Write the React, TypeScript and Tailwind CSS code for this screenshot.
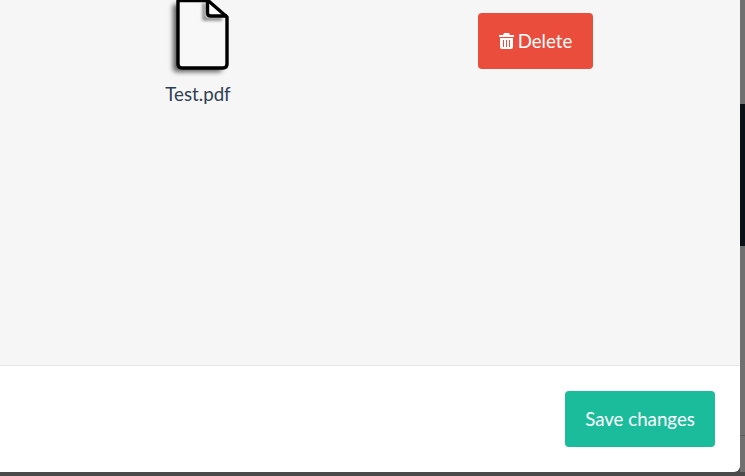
const docPath = "M13 0.5H43L62 17V64Q62 68 58 68H17Q13 68 13 64Z"

const FileIcon = () => {
  return (
    <svg width="66" height="78" viewBox="0 0 66 78" className="block">
      <defs>
        <filter id="blur" x="-30%" y="-30%" width="160%" height="160%">
          <feGaussianBlur stdDeviation="2.8" />
        </filter>
        <filter id="blurSmall" x="-50%" y="-50%" width="200%" height="200%">
          <feGaussianBlur stdDeviation="1.6" />
        </filter>
      </defs>
      <path d={docPath} transform="translate(-5 4)" fill="#000" opacity="0.62" filter="url(#blur)" />
      <path d={docPath} fill="#f8f8f8" />
      <path d="M42 0V16H60" transform="translate(-3 3)" fill="none" stroke="#000" strokeWidth="3" opacity="0.5" filter="url(#blurSmall)" />
      <path d="M43 0.5V13Q43 16 46 16H62Z" fill="#fff" />
      <path d={docPath} fill="none" stroke="#000" strokeWidth="3.4" strokeLinejoin="round" />
      <path d="M42.5 0V13Q42.5 16 46 16H62" fill="none" stroke="#000" strokeWidth="3.4" />
    </svg>
  )
}

const TrashIcon = () => {
  return (
    <svg width="15" height="16" viewBox="0 0 15 16" fill="#fff">
      <path d="M5 0H10L11 2H15V4H0V2H4Z" />
      <path d="M1 5H14V14Q14 16 12 16H3Q1 16 1 14ZM4 7V14H5V7ZM7 7V14H8V7ZM10 7V14H11V7Z" fillRule="evenodd" />
    </svg>
  )
}

export default function App() {
  return (
    <div className="w-[745px] h-[476px] flex flex-col overflow-hidden bg-[#4a4a4a] font-['Lato',sans-serif]">
      <div className="flex flex-1 min-h-0">
        <div className="w-[740px] flex flex-col bg-white rounded-br-md overflow-hidden">
          <div className="h-[365px] bg-[#f6f6f6] grid grid-cols-[396px_1fr]">
            <div className="flex flex-col items-center">
              <FileIcon />
              <p className="mt-[3px] text-[18.7px] leading-[26px] text-[#2f3f50]">Test.pdf</p>
            </div>
            <div className="pt-[13px] pl-[82px]">
              <button className="w-[115px] h-[56px] flex items-center justify-center gap-[4px] rounded-[4px] bg-[#ea4d3c] text-white text-[18.7px]">
                <TrashIcon />
                Delete
              </button>
            </div>
          </div>
          <div className="flex-1 border-t border-[#e5e5e5] flex justify-end pt-[25px] pr-[25px]">
            <button className="w-[150px] h-[56px] rounded-[4px] bg-[#1abc9c] text-white text-[18.7px]">Save changes</button>
          </div>
        </div>
        <div className="flex-1 flex flex-col bg-[#707070]">
          <div className="h-[104px]"></div>
          <div className="h-[142px] bg-[#0a1117]"></div>
          <div className="h-[190px] border-b border-[#5a5a5a]"></div>
        </div>
      </div>
      <div className="h-[4px]"></div>
    </div>
  )
}
